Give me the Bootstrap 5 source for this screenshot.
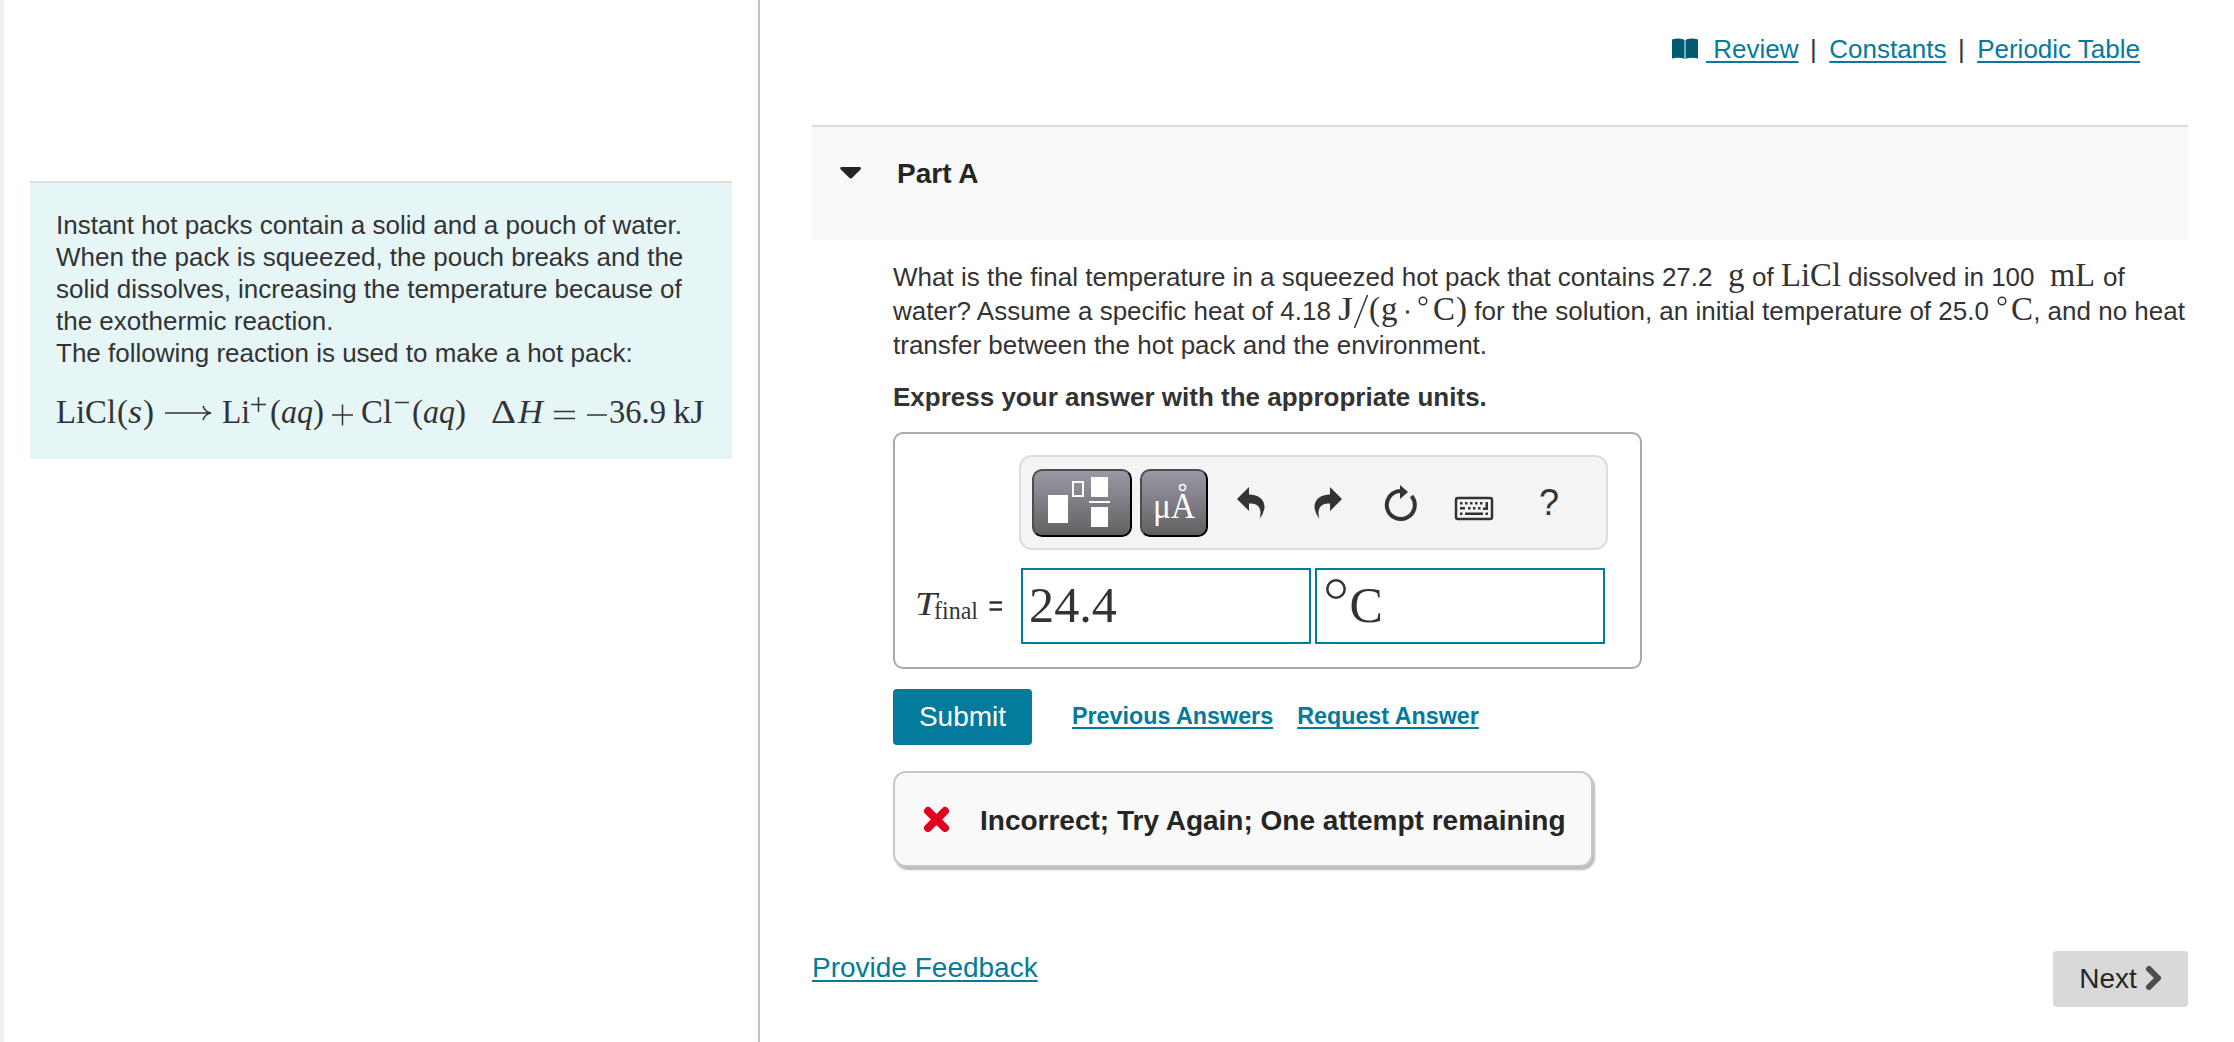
<!DOCTYPE html>
<html lang="en">
<head>
    <meta charset="UTF-8">
    <meta name="viewport" content="width=device-width, initial-scale=1.0">
    <title>Part A</title>
    <link href="https://cdn.jsdelivr.net/npm/bootstrap@5.3.3/dist/css/bootstrap.min.css" rel="stylesheet">
    <style>
        body { font-family: "Liberation Sans", Arial, sans-serif; font-size: 26px; line-height: 32px; color: #333; background: #fff; }
        a { color: #047a9c; text-decoration: underline; text-decoration-thickness: 2px; text-underline-offset: 3px; text-decoration-skip-ink: none; }
        svg { display: block; flex: none; overflow: visible; }
        .page { height: 1042px; }
        .side { width: 760px; border-left: 4px solid #f0f0f0; border-right: 2px solid #b4c7da; padding: 181px 26px 0 26px; }
        .intro { height: 278px; background: #e6f6f7; border-top: 2px solid #dbdedf; padding: 26px 0 0 26px; white-space: nowrap; }
        .equation { margin-top: 25px; }
        .math text { font-family: "Liberation Serif", "Times New Roman", serif; font-size: 33px; fill: #333; }
        .math .it { font-style: italic; }
        .math .sub { font-size: 25px; }
        .math path, .math circle { fill: none; stroke: #333; stroke-width: 1.5; }
        .math .equals { stroke-width: 2.5; }
        .main { padding: 0 46px 0 52px; }
        .tools { height: 125px; padding: 33px 48px 0 0; }
        .tools .bar { margin: 0 12.5px 0 11.5px; }
        .part { height: 115px; background: #f9f9f9; border-top: 2px solid #dcdede; padding: 30px 0 0 28px; color: #252525; }
        .part h2 { font-size: 28px; line-height: 34px; margin: 0 0 0 35px; font-weight: bold; }
        .part svg { margin-top: 1px; }
        .work { padding-left: 81px; }
        .question { padding-top: 20px; white-space: nowrap; }
        .qline { height: 34px; line-height: 34px; }
        .qline svg { display: inline-block; vertical-align: baseline; }
        .express { margin-top: 19px; }
        .answer { width: 749px; height: 237px; margin-top: 19px; border: 2px solid #aaa; border-radius: 10px; padding: 21px 32px 0 20px; }
        .toolbar { width: 589px; height: 95px; background: #f4f4f4; border: 2px solid #dcdcdc; border-radius: 13px; padding: 11px; }
        .key { height: 68px; border: 2px solid; border-color: #4d4d4d #000 #000 #4d4d4d; border-radius: 10px; background: linear-gradient(#9b98a6, #616161); padding: 0; }
        .key text { font-family: "Liberation Serif", serif; font-size: 35px; fill: #fff; }
        .key-wide { width: 100px; }
        .key-unit { width: 68px; margin-left: 8px; }
        .inputs { padding-top: 18px; }
        .field { width: 290px; height: 76px; border: 2px solid #047a9c; background: #fff; }
        .field text { font-family: "Liberation Serif", serif; font-size: 50px; fill: #333; }
        .btn-send { width: 139px; height: 56px; background: #047a9c; color: #fff; border: 0; border-radius: 4px; font-size: 28px; padding: 0; }
        .more { font-size: 23.3px; font-weight: bold; margin-top: -2px; }
        .result { width: 700px; height: 96px; background: #f9f9f9; border: 2px solid #c7c7c7; border-radius: 13px; box-shadow: 2px 3px 2px #bbb; margin-top: 26px; padding-left: 28px; font-size: 28px; font-weight: bold; color: #252525; }
        .result span { padding: 4px 0 0 30px; }
        .foot { font-size: 28px; padding-top: 84px; }
        .foot a { margin-top: 1px; }
        .btn-next { width: 135px; height: 56px; background: #d9d9d9; color: #252525; border: 0; border-radius: 4px; font-size: 28px; padding: 0; }
    </style>
</head>
<body>
    <div class="page d-flex">
        <div class="side flex-shrink-0">
            <div class="intro">
                Instant hot packs contain a solid and a pouch of water.<br>
                When the pack is squeezed, the pouch breaks and the<br>
                solid dissolves, increasing the temperature because of<br>
                the exothermic reaction.<br>
                The following reaction is used to make a hot pack:
                <svg class="math equation" width="650" height="40">
                    <text x="0" y="29" textLength="60" lengthAdjust="spacingAndGlyphs">LiCl</text>
                    <text x="61" y="29">(</text>
                    <text class="it" x="72" y="29" textLength="14" lengthAdjust="spacingAndGlyphs">s</text>
                    <text x="87" y="29">)</text>
                    <path d="M109 19H154M147 12Q149 18 155 19Q149 20 147 26"/>
                    <text x="166" y="29" textLength="28" lengthAdjust="spacingAndGlyphs">Li</text>
                    <path d="M195 10.500H210M202.500 3V18"/>
                    <text x="214" y="29">(</text>
                    <text class="it" x="225" y="29" textLength="32" lengthAdjust="spacingAndGlyphs">aq</text>
                    <text x="257" y="29">)</text>
                    <path d="M276 21H297M286.500 10.500V31.500"/>
                    <text x="305" y="29" textLength="31" lengthAdjust="spacingAndGlyphs">Cl</text>
                    <path d="M339 8.500H353"/>
                    <text x="356" y="29">(</text>
                    <text class="it" x="367" y="29" textLength="32" lengthAdjust="spacingAndGlyphs">aq</text>
                    <text x="399" y="29">)</text>
                    <text x="435" y="29" textLength="25" lengthAdjust="spacingAndGlyphs">Δ</text>
                    <text class="it" x="462" y="29" textLength="25" lengthAdjust="spacingAndGlyphs">H</text>
                    <path d="M498 17.500H519M498 24.500H519M531 21H551"/>
                    <text x="553" y="29" textLength="57" lengthAdjust="spacingAndGlyphs">36.9</text>
                    <text x="617" y="29" textLength="31" lengthAdjust="spacingAndGlyphs">kJ</text>
                </svg>
            </div>
        </div>

        <div class="main flex-grow-1">
            <div class="tools d-flex justify-content-end">
                <svg class="me-2 mt-1" width="26" height="25" viewBox="0 0 26 25"><path fill="#005a70" d="M0 2.500Q6 .500 12 2.500V21.500Q6 20 0 21.500ZM14 2.500Q20 .500 26 2.500V21.500Q20 20 14 21.500Z"/><path stroke="#7faab5" stroke-width="2" d="M13 3V22"/></svg>
                <a href="#">&nbsp;Review</a><span class="bar">|</span><a href="#">Constants</a><span class="bar">|</span><a href="#">Periodic Table</a>
            </div>

            <div class="part d-flex align-items-start">
                <svg width="22" height="34"><path fill="#252525" d="M1.500 9H19.500Q22 9.500 20.500 11.500L12.500 19.500Q10.800 21.500 9 19.500L.800 11.500Q-.700 9.500 1.500 9Z"/></svg>
                <h2>Part A</h2>
            </div>

            <div class="work">
                <div class="question">
                    <div class="qline">What is the final temperature in a squeezed hot pack that contains 27.2 <svg class="math" width="25" height="24"><text x="8" y="24" textLength="16">g</text></svg> of <svg class="math" width="60" height="24"><text x="0" y="24" textLength="60" lengthAdjust="spacingAndGlyphs">LiCl</text></svg> dissolved in 100 <svg class="math" width="54" height="24"><text x="8" y="24" textLength="45" lengthAdjust="spacingAndGlyphs">mL</text></svg> of</div>
                    <div class="qline">water? Assume a specific heat of 4.18 <svg class="math" width="129" height="24">
                        <text x="0" y="24" textLength="15" lengthAdjust="spacingAndGlyphs">J</text><path d="M16.500 32L29.500 -1"/><text x="31" y="24">(</text><text x="43" y="24">g</text><circle cx="69.500" cy="16" r="1"/><circle cx="85" cy="5" r="3.800"/><text x="95" y="24">C</text><text x="118" y="24">)</text>
                    </svg> for the solution, an initial temperature of 25.0 <svg class="math" width="37" height="24"><circle cx="6" cy="5" r="3.800"/><text x="15" y="24">C</text></svg>, and no heat</div>
                    <div class="qline">transfer between the hot pack and the environment.</div>
                </div>
                <div class="express fw-bold">Express your answer with the appropriate units.</div>

                <div class="answer">
                    <div class="toolbar d-flex align-items-center ms-auto">
                        <button class="key key-wide">
                            <svg width="96" height="64">
                                <path fill="#fff" d="M14 24H34V52H14ZM57 6H74V26H57ZM57 36H74V56H57ZM55 30H76V32H55Z"/>
                                <path fill="none" stroke="#fff" stroke-width="2" d="M39 11H49V25H39Z"/>
                            </svg>
                        </button>
                        <button class="key key-unit">
                            <svg width="64" height="64"><text x="11" y="47" textLength="42" lengthAdjust="spacingAndGlyphs">μA</text><circle cx="40.500" cy="16.500" r="3" fill="none" stroke="#fff" stroke-width="1.500"/></svg>
                        </button>
                        <!-- undo, redo, reset, keyboard, help -->
                        <svg width="386" height="68" fill="#333">
                            <path d="M29 30L41 18V25.500C51 25.500 57 31 56.500 39Q55.500 45 51.500 50Q54 42 50.500 37.500Q47.500 34 41 34.500V42Z"/>
                            <path d="M134 30L122 18V25.500C112 25.500 106 31 106.500 39Q107.500 45 111.500 50Q109 42 112.500 37.500Q115.500 34 122 34.500V42Z"/>
                            <path fill="none" stroke="#333" stroke-width="4" d="M192.500 22A14 14 0 1 0 203.500 27"/>
                            <path d="M192 16L200 23L192 30Z"/>
                            <rect x="248" y="29" width="36" height="21" rx="2" fill="none" stroke="#333" stroke-width="2.500"/>
                            <path d="M252 33H254.500V35.500H252ZM257 33H259.500V35.500H257ZM262 33H264.500V35.500H262ZM267 33H269.500V35.500H267ZM272 33H274.500V35.500H272ZM277.500 33H280V41H275V38.500H277.500ZM252 38H257V40.500H252ZM260 38H262.500V40.500H260ZM265 38H267.500V40.500H265ZM270 38H272.500V40.500H270ZM252 43.500H254.500V46H252ZM257 43.500H275V46H257ZM277.500 43.500H280V46H277.500Z"/>
                            <text x="331" y="46" font-size="36">?</text>
                        </svg>
                    </div>
                    <div class="d-flex">
                        <svg class="math" width="106" height="90"><text class="it" x="0" y="65" textLength="22" lengthAdjust="spacingAndGlyphs">T</text><text class="sub" x="19" y="69" textLength="44" lengthAdjust="spacingAndGlyphs">final</text><path class="equals" d="M74.500 52.500H87M74.500 59.500H87"/></svg>
                        <div class="inputs d-flex gap-1">
                            <div class="field"><svg width="286" height="72"><text x="6" y="52" textLength="88" lengthAdjust="spacingAndGlyphs">24.4</text></svg></div>
                            <div class="field"><svg width="286" height="72"><circle cx="19" cy="19" r="8.700" fill="none" stroke="#333" stroke-width="2.500"/><text x="32.500" y="52">C</text></svg></div>
                        </div>
                    </div>
                </div>

                <div class="d-flex align-items-center mt-3 pt-1">
                    <button class="btn-send">Submit</button>
                    <a class="more ms-4 ps-3" href="#">Previous Answers</a>
                    <a class="more ms-4" href="#">Request Answer</a>
                </div>

                <div class="result d-flex align-items-center">
                    <svg width="27" height="28" viewBox="0 0 27 28"><path fill="none" stroke="#e0001f" stroke-width="8" stroke-linecap="round" d="M5 6L22 23M22 6L5 23"/></svg>
                    <span>Incorrect; Try Again; One attempt remaining</span>
                </div>
            </div>

            <div class="foot d-flex justify-content-between align-items-start">
                <a href="#">Provide Feedback</a>
                <button class="btn-next d-flex align-items-center justify-content-center">Next
                    <svg class="ms-2" width="17" height="26"><path fill="none" stroke="#4d4d4d" stroke-width="6" stroke-linecap="round" stroke-linejoin="round" d="M4 3L13 12L4 21"/></svg>
                </button>
            </div>
        </div>
    </div>
    <script src="https://cdn.jsdelivr.net/npm/bootstrap@5.3.3/dist/js/bootstrap.bundle.min.js"></script>
</body>
</html>
